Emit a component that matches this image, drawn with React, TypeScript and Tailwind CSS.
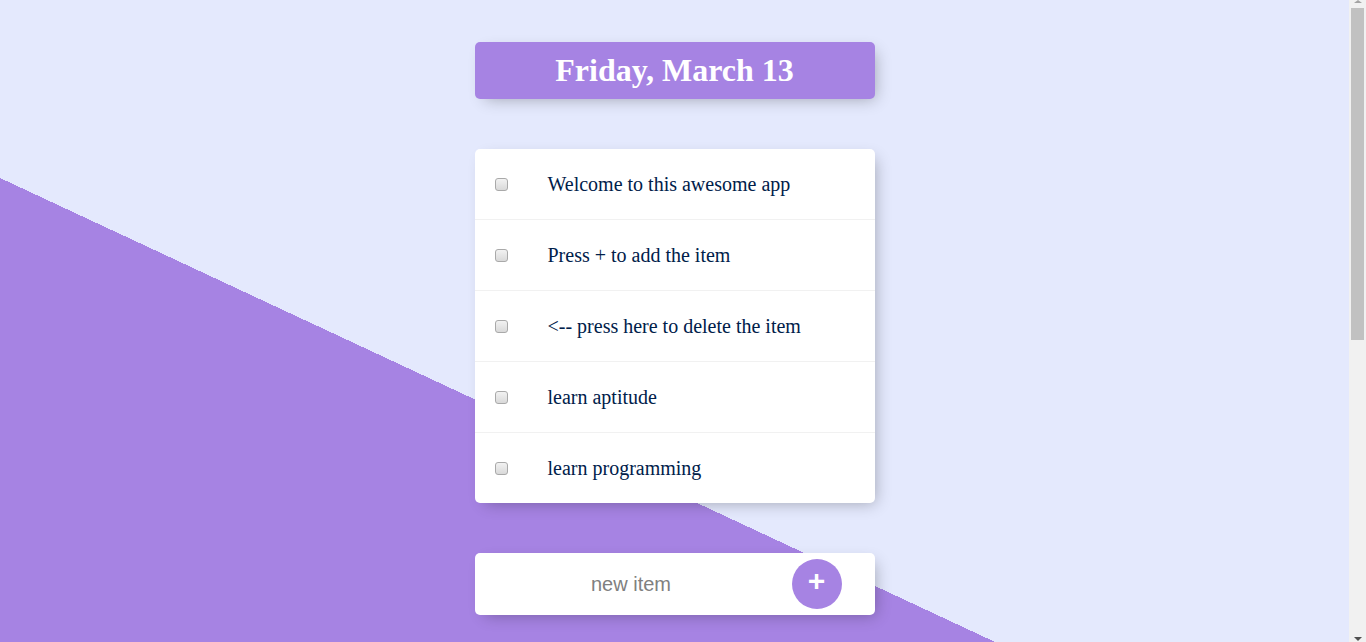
import React from "react";

const items = [
  "Welcome to this awesome app",
  "Press + to add the item",
  "<-- press here to delete the item",
  "learn aptitude",
  "learn programming",
];

export default function App() {
  return (
    <div className="flex h-[642px] w-full overflow-hidden">
      <div className="h-[642px] min-w-0 flex-1 bg-[#e4e9fd] bg-[linear-gradient(25deg,#a683e3_50%,#e4e9fd_50%)] bg-[length:100%_985px] bg-no-repeat pt-[42px] font-['Liberation_Serif',serif]">
        <div className="mx-auto flex h-[57px] w-[400px] items-center justify-center rounded-[5px] bg-[#a683e3] shadow-[5px_5px_15px_-5px_rgba(0,0,0,0.3)]">
          <h1 className="text-[32px] font-bold leading-[37px] text-white">Friday, March 13</h1>
        </div>

        <div className="mx-auto mt-[50px] w-[400px] rounded-[5px] bg-white shadow-[5px_5px_15px_-5px_rgba(0,0,0,0.3)]">
          {items.map((t, i) => (
            <div
              key={i}
              className="box-content flex min-h-[70px] items-center border-b border-[#f1f1f1] last:border-b-0"
            >
              <input
                type="checkbox"
                className="mx-[20px] h-[13px] w-[13px] shrink-0 appearance-none rounded-[3px] border border-[#a9a9a9] bg-gradient-to-b from-[#f2f2f2] to-[#d9d9d9]"
              />
              <p className="m-0 px-[20px] text-[20px] font-extralight text-[#00204a]">{t}</p>
            </div>
          ))}
        </div>

        <form
          className="mx-auto mt-[50px] flex h-[62px] w-[400px] items-center rounded-[5px] bg-white shadow-[5px_5px_15px_-5px_rgba(0,0,0,0.3)]"
          onSubmit={(e) => e.preventDefault()}
        >
          <input
            type="text"
            placeholder="new item"
            className="h-[60px] w-[313px] border-none bg-transparent text-center font-['Liberation_Sans',Arial,sans-serif] text-[20px] font-extralight outline-none placeholder:text-[#808080] placeholder:opacity-100"
          />
          <button
            type="submit"
            className="ml-[4px] flex h-[50px] w-[50px] items-center justify-center rounded-full bg-[#a683e3] pb-[6px] font-['Liberation_Sans',Arial,sans-serif] text-[30px] font-bold leading-none text-white"
          >
            +
          </button>
        </form>
      </div>

      <div className="flex h-[642px] w-[17px] shrink-0 flex-col items-center bg-[#f1f1f1]">
        <div className="h-0 w-0 border-x-[4px] border-b-[3px] border-x-transparent border-b-[#a3a3a3]" />
        <div className="mt-[5px] h-[332px] w-[13px] bg-[#c1c1c1]" />
        <div className="flex-1" />
        <div className="mb-[1px] h-0 w-0 border-x-[4px] border-t-[4px] border-x-transparent border-t-[#505050]" />
      </div>
    </div>
  );
}
